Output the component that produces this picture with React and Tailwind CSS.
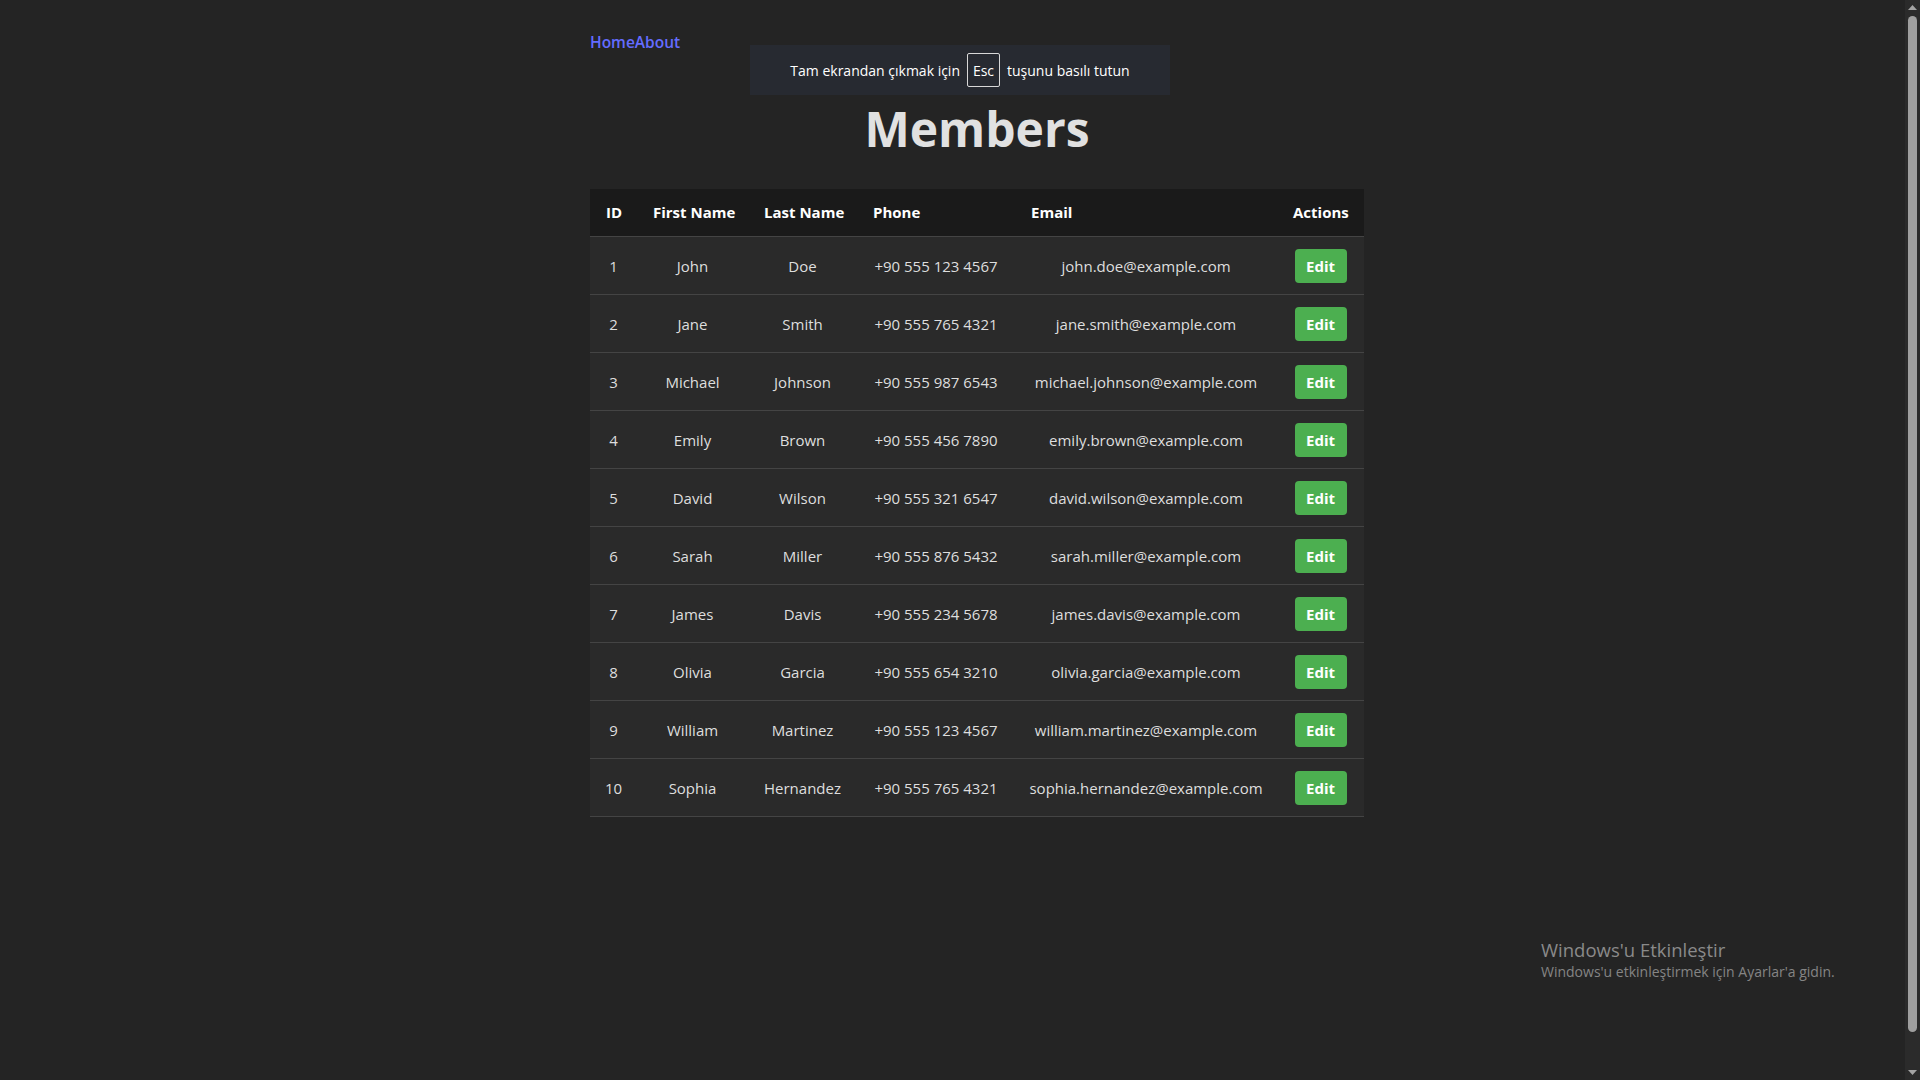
import React from 'react';

// ── Data ──────────────────────────────────────────────────────────────────────
const MEMBERS = [
  { id: 1, first: 'John', last: 'Doe', phone: '+90 555 123 4567', email: 'john.doe@example.com' },
  { id: 2, first: 'Jane', last: 'Smith', phone: '+90 555 765 4321', email: 'jane.smith@example.com' },
  { id: 3, first: 'Michael', last: 'Johnson', phone: '+90 555 987 6543', email: 'michael.johnson@example.com' },
  { id: 4, first: 'Emily', last: 'Brown', phone: '+90 555 456 7890', email: 'emily.brown@example.com' },
  { id: 5, first: 'David', last: 'Wilson', phone: '+90 555 321 6547', email: 'david.wilson@example.com' },
  { id: 6, first: 'Sarah', last: 'Miller', phone: '+90 555 876 5432', email: 'sarah.miller@example.com' },
  { id: 7, first: 'James', last: 'Davis', phone: '+90 555 234 5678', email: 'james.davis@example.com' },
  { id: 8, first: 'Olivia', last: 'Garcia', phone: '+90 555 654 3210', email: 'olivia.garcia@example.com' },
  { id: 9, first: 'William', last: 'Martinez', phone: '+90 555 123 4567', email: 'william.martinez@example.com' },
  { id: 10, first: 'Sophia', last: 'Hernandez', phone: '+90 555 765 4321', email: 'sophia.hernandez@example.com' },
];

const COLUMNS = [
  { label: 'ID', width: 'w-[47px]' },
  { label: 'First Name', width: 'w-[111px]' },
  { label: 'Last Name', width: 'w-[109px]' },
  { label: 'Phone', width: 'w-[158px]' },
  { label: 'Email', width: 'w-[262px]' },
  { label: 'Actions', width: 'w-[87px]' },
];

// ── Members table ─────────────────────────────────────────────────────────────
function MembersTable() {
  return (
    <table className="w-[774px] table-fixed border-collapse text-[15px]">
      <colgroup>
        {COLUMNS.map((c) => (
          <col key={c.label} className={c.width} />
        ))}
      </colgroup>
      <thead>
        <tr className="bg-[#1a1a1a] border-b border-[#444]">
          {COLUMNS.map((c) => (
            <th key={c.label} className="h-[48px] px-4 text-left font-bold text-white whitespace-nowrap">
              {c.label}
            </th>
          ))}
        </tr>
      </thead>
      <tbody>
        {MEMBERS.map((m) => (
          <tr key={m.id} className="bg-[#2a2a2a] border-b border-[#444] text-[#dedede]">
            <td className="h-[58px] px-2 text-center">{m.id}</td>
            <td className="px-2 text-center">{m.first}</td>
            <td className="px-2 text-center">{m.last}</td>
            <td className="px-2 text-center whitespace-nowrap">{m.phone}</td>
            <td className="px-2 text-center whitespace-nowrap">{m.email}</td>
            <td className="px-2 text-center">
              <button className="h-[34px] w-[52px] rounded bg-[#4caf50] text-[15px] font-bold text-white">
                Edit
              </button>
            </td>
          </tr>
        ))}
      </tbody>
    </table>
  );
}

// ── Browser overlays ──────────────────────────────────────────────────────────
function FullscreenToast() {
  return (
    <div className="absolute left-1/2 top-[45px] flex h-[50px] w-[420px] -translate-x-1/2 items-center justify-center bg-[#272a31] text-[14px] text-white">
      <span>Tam ekrandan çıkmak için</span>
      <span className="mx-[7px] flex h-[34px] w-[33px] items-center justify-center rounded-[2px] border border-[#d8d8d8]">
        Esc
      </span>
      <span>tuşunu basılı tutun</span>
    </div>
  );
}

function ActivationWatermark() {
  return (
    <div className="absolute left-[1541px] top-[938px] text-[#8a8a8a]">
      <div className="text-[18.5px] leading-[24px]">Windows'u Etkinleştir</div>
      <div className="text-[14px] leading-[20px] text-[#858585]">Windows'u etkinleştirmek için Ayarlar'a gidin.</div>
    </div>
  );
}

function Scrollbar() {
  return (
    <div className="absolute right-0 top-0 flex h-full w-[15px] flex-col items-center bg-[#2b2b2b]">
      <svg width="9" height="6" viewBox="0 0 9 6" className="mt-[4px]">
        <path d="M0 6 L4.5 1 L9 6 Z" fill="#a3a3a3" />
      </svg>
      <div className="mt-[6px] h-[1016px] w-[9px] rounded-full bg-[#9f9f9f]" />
      <div className="flex-1" />
      <svg width="9" height="6" viewBox="0 0 9 6" className="mb-[4px]">
        <path d="M0 0 L4.5 5 L9 0 Z" fill="#a3a3a3" />
      </svg>
    </div>
  );
}

// ── Main ──────────────────────────────────────────────────────────────────────
export default function App() {
  return (
    <div
      className="relative h-screen w-full overflow-hidden bg-[#242424] text-[#dedede]"
      style={{ fontFamily: '"Open Sans", "Noto Sans", sans-serif' }}
    >
      <div className="ml-[590px] flex w-[774px] flex-col pt-[30px]">
        <nav className="flex text-[15.5px] font-semibold leading-[24px] text-[#646cff]">
          <a href="#">Home</a>
          <a href="#">About</a>
        </nav>
        <h1 className="mt-[49px] text-center text-[48px] font-bold leading-[1.1] text-[#e1e1e1]">Members</h1>
        <div className="mt-[33px]">
          <MembersTable />
        </div>
      </div>

      <FullscreenToast />
      <ActivationWatermark />
      <Scrollbar />
    </div>
  );
}
